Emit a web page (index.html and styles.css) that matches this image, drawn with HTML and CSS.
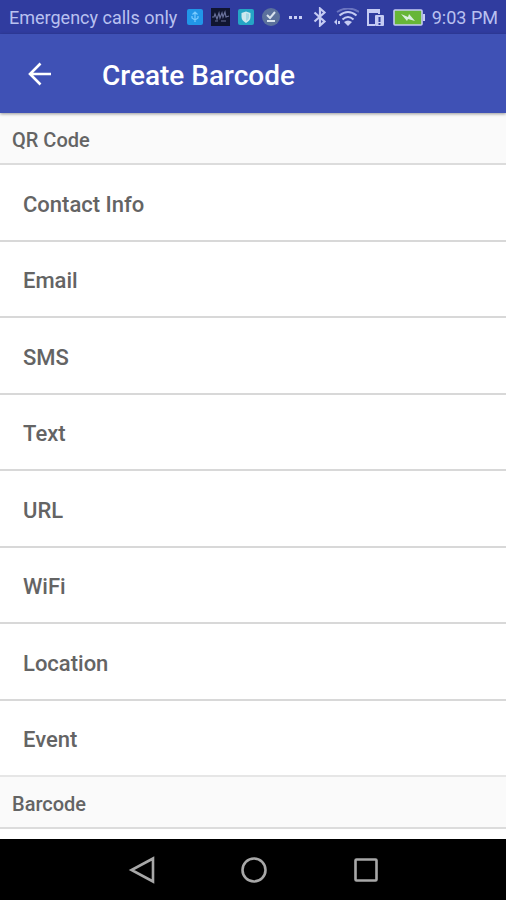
FILE: index.html
```html
<!DOCTYPE html>
<html lang="en">
<head>
<meta charset="utf-8">
<title>Create Barcode</title>
<link rel="stylesheet" href="styles.css">
</head>
<body>
<div class="status">
  <span class="carrier">Emergency calls only</span>
  <div class="notifications">
    <svg width="16" height="16" viewBox="0 0 16 16"><rect width="16" height="16" rx="2" fill="#2196e8"/><path d="M8 3v10M5.500 5.500 8 3l2.500 2.500M5 7v2l3 2 3-2V7" fill="none" stroke="#78cbff" stroke-width="1.200"/></svg>
    <svg width="19" height="18" viewBox="0 0 19 18"><rect width="19" height="18" fill="#101530"/><path d="M1 9h2l1-3 2 5 2-6 1 5 2-5 1 4 2-5 1 5 3-1M4 13h3m3 0h5" fill="none" stroke="#68709a" stroke-width="1.200"/></svg>
    <svg width="16" height="16" viewBox="0 0 16 16"><rect width="16" height="16" rx="2" fill="#25a5c5"/><path d="M8 2.500 12.500 4v4c0 3-2 4.500-4.500 6-2.500-1.500-4.500-3-4.500-6V4z" fill="#cce9ef"/><path d="M8 4v8c2-1 3-2.500 3-4V5z" fill="#a1d7e4"/></svg>
    <svg width="18" height="18" viewBox="0 0 18 18"><circle cx="9" cy="9" r="9" fill="#5b719c"/><path d="m5 7 3 3 5-6M5 13h8" fill="none" stroke="#d8e3ee" stroke-width="2"/></svg>
    <svg width="16" height="16" viewBox="0 0 16 16" fill="#c8cef5"><rect x="1" y="7" width="3" height="3"/><rect x="6" y="7" width="3" height="3"/><rect x="11" y="7" width="3" height="3"/></svg>
  </div>
  <div class="system">
    <svg width="14" height="20" viewBox="0 0 14 20"><path d="m1.500 5.500 10 9L7 18.500v-17l4.500 4-10 9" fill="none" stroke="#c5cbf3" stroke-width="2.200"/></svg>
    <svg class="wifi" width="25" height="18" viewBox="0 0 25 18"><g fill="none" stroke="#c5cbf3" stroke-width="2"><path d="M8.500 11.500q5.500-5 11 0"/><path d="M5.500 7.500q8.500-7 17 0"/><path d="M3 4q11-7 22 0" opacity=".4"/></g><path d="m14 18-4-4q4-3 8 0zM0 14l3-3v6zM4 13h2v3H4z" fill="#c5cbf3"/></svg>
    <svg class="sim" width="18" height="19" viewBox="0 0 18 19"><path d="M8 17H1V2h11v4" fill="none" stroke="#c5cbf3" stroke-width="2"/><path d="M1 1h11v4H1z" fill="#c5cbf3"/><rect x="8" y="7" width="9" height="11" rx="1" fill="#c5cbf3"/><path d="M12.500 9v5m0 1v2" stroke="#303e9f" stroke-width="2"/></svg>
    <svg class="battery" width="32" height="17" viewBox="0 0 32 17"><rect x="1" y="1" width="28" height="15" rx="1" fill="#67b637" stroke="#c5cbf3" stroke-width="1.600"/><path d="M30 5h2v7h-2z" fill="#c5cbf3"/><path d="m8 5 7 3 1-3 6 7-7-2-1 2z" fill="#dbefe0"/></svg>
    <span class="clock">9:03 PM</span>
  </div>
</div>
<header class="appbar">
  <button class="back" type="button" aria-label="Back"><svg width="24" height="24" viewBox="0 0 24 24"><path d="M23 12H2M12.500 1.500 2 12l10.500 10.500" fill="none" stroke="#fff" stroke-width="2.600"/></svg></button>
  <h1>Create Barcode</h1>
</header>
<main>
  <h2>QR Code</h2>
  <ul>
    <li><button type="button">Contact Info</button></li>
    <li><button type="button">Email</button></li>
    <li><button type="button">SMS</button></li>
    <li><button type="button">Text</button></li>
    <li><button type="button">URL</button></li>
    <li><button type="button">WiFi</button></li>
    <li><button type="button">Location</button></li>
    <li><button type="button">Event</button></li>
  </ul>
  <h2>Barcode</h2>
</main>
<nav>
  <button type="button" aria-label="Back"><svg width="28" height="28" viewBox="0 0 28 28"><path d="M25 2.500v23L3.500 14z"/></svg></button>
  <button type="button" aria-label="Home"><svg width="28" height="28" viewBox="0 0 28 28"><circle cx="14" cy="14" r="11.500"/></svg></button>
  <button type="button" aria-label="Recent apps"><svg width="28" height="28" viewBox="0 0 28 28"><rect x="3.500" y="3.500" width="21" height="21" rx="1"/></svg></button>
</nav>
</body>
</html>
```
FILE: styles.css
```css
* { box-sizing: border-box; }
body {
  margin: 0;
  min-height: 100vh;
  display: flex;
  flex-direction: column;
  background: #fff;
  color: #646464;
  font-family: Roboto, "Liberation Sans", sans-serif;
}
button {
  border: 0;
  padding: 0;
  background: none;
  color: inherit;
  font: inherit;
}
svg { display: block; flex: none; }
.status {
  height: 34px;
  padding: 0 8px 0 9px;
  display: flex;
  align-items: center;
  background: #303c9f;
  color: #b9c1f0;
  font-size: 18px;
  white-space: nowrap;
}
.notifications { display: flex; align-items: center; gap: 8px; margin-left: 10px; }
.system { display: flex; align-items: center; margin-left: auto; }
.wifi { margin-left: 7px; }
.sim { margin-left: 8px; }
.battery { margin-left: 8px; }
.clock { margin-left: 7px; }
.appbar {
  position: relative;
  height: 79px;
  padding-left: 28px;
  display: flex;
  align-items: center;
  gap: 50px;
  background: #3f51b5;
  color: #fff;
  box-shadow: 0 1px 3px #0006;
}
h1 { margin: 0; padding-top: 4px; font-size: 28px; font-weight: 500; }
main { flex: 1; display: flex; flex-direction: column; padding-bottom: 10px; }
h2 {
  height: 52px;
  margin: 0;
  padding: 4px 12px 0;
  display: flex;
  align-items: center;
  background: #fafafa;
  border-bottom: 2px solid #dcdcdc;
  font-size: 20px;
  font-weight: 500;
}
ul { flex: 1; margin: 0; padding: 0; list-style: none; display: flex; flex-direction: column; }
li { flex: 1; display: flex; border-bottom: 2px solid #d8d8d8; }
li:last-child { border-color: #e6e6e6; }
li button { flex: 1; padding: 4px 0 0 23px; font-size: 22px; font-weight: 500; text-align: left; }
nav {
  height: 61px;
  padding-left: 2px;
  display: flex;
  justify-content: center;
  gap: 84px;
  background: #000;
}
nav svg { fill: none; stroke: #a8a8a8; stroke-width: 2.6px; }
```
